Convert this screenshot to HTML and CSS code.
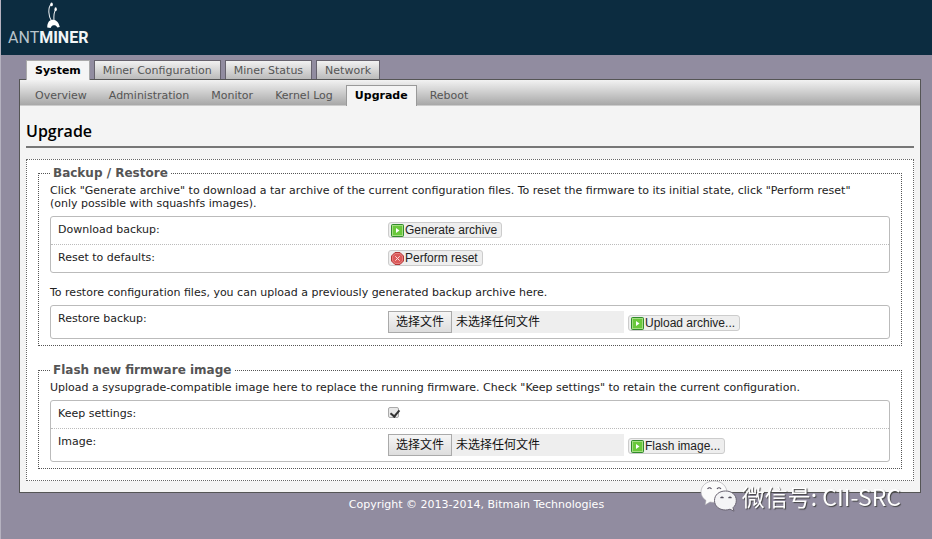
FILE: index.html
```html
<!DOCTYPE html>
<html lang="en">
<head>
<meta charset="utf-8">
<title>Upgrade</title>
<link rel="stylesheet" href="styles.css">
</head>
<body>
<svg class="sprite" aria-hidden="true">
  <symbol id="run" viewBox="0 0 13 13">
    <rect x=".5" y=".5" width="12" height="12" rx="1" fill="#69c83b" stroke="#318a2b"/>
    <rect x="1.5" y="1.5" width="10" height="10" fill="none" stroke="#a4dd82"/>
    <path d="M5 4v5l3.500-2.500z" fill="#fff"/>
  </symbol>
  <symbol id="reset" viewBox="0 0 13 13">
    <path d="M4 .5h5L12.500 4v5L9 12.500H4L.5 9V4z" fill="#dc5a5a" stroke="#b33636"/>
    <path d="M4.300 1.500h4.400l2.800 2.800v4.400l-2.800 2.800H4.300l-2.800-2.800V4.300z" fill="none" stroke="#e58080"/>
    <path d="M4.300 4.300l4.400 4.400M8.700 4.300L4.300 8.700" stroke="#fbdcdc"/>
  </symbol>
</svg>
<header class="header">
  <a class="logo" href="#" aria-label="Antminer">
    <svg class="ant" viewBox="0 0 16 28" aria-hidden="true">
      <path d="M5.500 20C2 14 1.500 6 5 2.500M8 20C7.500 14 8 10 10 7.500" fill="none" stroke="#e6eaed" stroke-width="1.100"/>
      <ellipse cx="5.500" cy="2.500" rx="1.300" ry="2" fill="#fff"/>
      <ellipse cx="9.700" cy="7.500" rx="1.200" ry="2" fill="#fff"/>
      <path d="M1 26.500C1 21 3.500 18.500 7 18.500s6 3 7 7.500l-2.500.5c-1-2-2.500-2.500-4-2.300-1.500.3-2.500 1.300-3 2.800z" fill="#fff"/>
    </svg>
    <span class="wordmark">ANT<b>MINER</b></span>
  </a>
</header>
<main class="page">
  <nav class="tabs">
    <a class="tab active" href="#">System</a>
    <a class="tab" href="#">Miner Configuration</a>
    <a class="tab" href="#">Miner Status</a>
    <a class="tab" href="#">Network</a>
  </nav>
  <div class="panel">
    <nav class="subtabs">
      <a class="subtab" href="#">Overview</a>
      <a class="subtab" href="#">Administration</a>
      <a class="subtab" href="#">Monitor</a>
      <a class="subtab" href="#">Kernel Log</a>
      <a class="subtab active" href="#">Upgrade</a>
      <a class="subtab" href="#">Reboot</a>
    </nav>
    <div class="content">
      <h1 class="title">Upgrade</h1>
      <form class="map">
        <fieldset class="section">
          <legend>Backup / Restore</legend>
          <p class="descr">Click "Generate archive" to download a tar archive of the current configuration files. To reset the firmware to its initial state, click "Perform reset" (only possible with squashfs images).</p>
          <div class="box">
            <div class="row"><span class="name">Download backup:</span><button class="btn" type="button"><svg class="icon"><use href="#run"/></svg>Generate archive</button></div>
            <div class="row"><span class="name">Reset to defaults:</span><button class="btn" type="button"><svg class="icon"><use href="#reset"/></svg>Perform reset</button></div>
          </div>
          <p class="descr later">To restore configuration files, you can upload a previously generated backup archive here.</p>
          <div class="box">
            <div class="row upload"><label class="name" for="archive">Restore backup:</label><label class="file"><input id="archive" type="file"><span class="choose">选择文件</span><span class="chosen">未选择任何文件</span></label><button class="btn" type="button"><svg class="icon"><use href="#run"/></svg>Upload archive...</button></div>
          </div>
        </fieldset>
        <fieldset class="section">
          <legend>Flash new firmware image</legend>
          <p class="descr">Upload a sysupgrade-compatible image here to replace the running firmware. Check "Keep settings" to retain the current configuration.</p>
          <div class="box">
            <div class="row"><label class="name" for="keep">Keep settings:</label><input class="check" id="keep" type="checkbox" checked></div>
            <div class="row upload"><label class="name" for="image">Image:</label><label class="file"><input id="image" type="file"><span class="choose">选择文件</span><span class="chosen">未选择任何文件</span></label><button class="btn" type="button"><svg class="icon"><use href="#run"/></svg>Flash image...</button></div>
          </div>
        </fieldset>
      </form>
    </div>
  </div>
</main>
<footer class="footer">Copyright © 2013-2014, Bitmain Technologies</footer>
<div class="account">
  <svg class="wechat" viewBox="0 0 38 32" aria-hidden="true">
    <path d="M14 1C6.500 1 1 6 1 12c0 3.500 2 6.500 5 8.500L5 25l5-3c6 1.500 16-1 17-9C27 6 21.500 1 14 1z" fill="#fbfbfb" stroke="#a5a2aa" stroke-width=".6"/>
    <path d="M25.500 11C19 11 14.500 15 14.500 20.500S19 30 25.500 30c1.500 0 3-.3 4.500-.8l4 2-1-3.500c2-1.800 3.300-4 3.300-7.200C36.300 15 32 11 25.500 11z" fill="#f4f4f6" stroke="#696472"/>
    <g fill="none" stroke="#55505f" stroke-width="1.200"><path d="M7.500 9q2-2.500 4 0M17 9q2-2.500 4 0M20.500 18q1.500-1.500 3 0M28.500 18q1.500-1.500 3 0"/></g>
  </svg>
  <span>微信号: CII-SRC</span>
</div>
</body>
</html>
```
FILE: styles.css
```css
* { box-sizing: border-box; }
html { min-height: 100%; background: #918ca0; border-left: 1px solid #b5b2c0; }
body { margin: 0; font: 11px/13px "DejaVu Sans", Verdana, sans-serif; color: #222; }
a { color: inherit; text-decoration: none; }
p { margin: 0; }
.sprite { position: absolute; width: 0; height: 0; }
.header { height: 55px; padding: 2px 7px; background: #0c2c40; }
.logo { display: inline-flex; flex-direction: column; color: #f2f5f7; }
.ant { width: 16px; height: 27px; margin-left: 38px; }
.wordmark { font: 16px/18px Roboto, sans-serif; color: #b9c4cb; }
.wordmark b { color: #f2f5f7; }
.page { padding: 5px 11px 0 18px; }
.tabs { display: flex; gap: 4px; padding-left: 7px; }
.tab { height: 19px; padding: 3px 8px; border: 1px solid #66626d; border-bottom: 0; background: linear-gradient(#f1f1f1, #bbb); color: #555; line-height: 14px; }
.tab.active { margin-bottom: -1px; position: relative; height: 20px; background: #f5f5f5; border-color: #aaa; color: #000; font-weight: bold; }
.panel { border: 1px solid #555; background: #f4f4f4; }
.subtabs { display: flex; gap: 4px; height: 26px; padding: 5px 7px 0; border-bottom: 1px solid #ccc; background: linear-gradient(#f2f2f2, #a8a8a8); }
.subtab { height: 21px; padding: 4px 9px; color: #555; line-height: 14px; }
.subtab:first-child { padding-left: 8px; }
.subtab.active { padding: 3px 8px; border: 1px solid #999; border-bottom: 0; background: #f4f4f4; color: #000; font-weight: bold; }
.content { padding: 0 6px 11px; }
.title { margin: 13px 0 11px; padding-bottom: 3px; border-bottom: 2px solid #777; color: #000; font: 600 16px/24px "Open Sans", sans-serif; }
.map { padding: 5px 11px 11px; border: 1px dotted #666; background: #fff; }
.section { min-width: 0; margin: 0 0 16px; padding: 3px 11px 6px; border: 1px dotted #555; }
.section:last-child { margin-bottom: 0; }
.section legend { padding: 0 3px; color: #555; font-size: 12px; line-height: 16px; font-weight: bold; }
.descr { padding-right: 12px; }
.later { padding-top: 13px; }
.box { margin-top: 6px; border: 1px solid #bbb; border-radius: 3px; }
.row { display: flex; min-height: 27px; padding: 5px 7px; }
.row + .row { min-height: 28px; border-top: 1px dotted #bbb; }
.name { width: 330px; padding-top: 1px; flex: none; }
.btn { display: inline-flex; align-items: center; gap: 1px; align-self: flex-start; height: 16px; padding: 0 4px 0 2px; border: 1px solid #ccc; border-radius: 3px; background: #eee; color: #222; font: 12px/14px "Liberation Sans", sans-serif; }
.icon { width: 13px; height: 13px; }
.upload .btn { margin: 4px 0 0 4px; }
.file { display: flex; position: relative; width: 236px; height: 22px; background: #eee; font: 12px/20px "Liberation Sans", "Noto Sans CJK SC", sans-serif; color: #111; }
.file input { position: absolute; width: 100%; height: 100%; margin: 0; opacity: 0; }
.choose { padding: 0 7px; border: 1px solid #aaa; background: linear-gradient(#f6f6f6, #ddd); }
.chosen { padding: 1px 4px; }
.check { width: 11px; height: 11px; margin: 1px 0; appearance: none; border: 1px solid #aaa; border-radius: 2px; background: #e8e8e8; position: relative; }
.check:checked::after { content: ""; position: absolute; left: 3px; top: 0; width: 4px; height: 7px; border: solid #333; border-width: 0 2px 2px 0; transform: rotate(40deg); }
.footer { padding-top: 5px; margin: 0 0 0 20px; text-align: center; color: #fff; }
.account { position: fixed; right: 31px; bottom: 27px; display: flex; align-items: center; gap: 4px; color: #fff; font: 23px/32px "Noto Sans CJK SC", sans-serif; text-shadow: 1px 1px 1px #444; }
.wechat { width: 38px; height: 32px; }
```
